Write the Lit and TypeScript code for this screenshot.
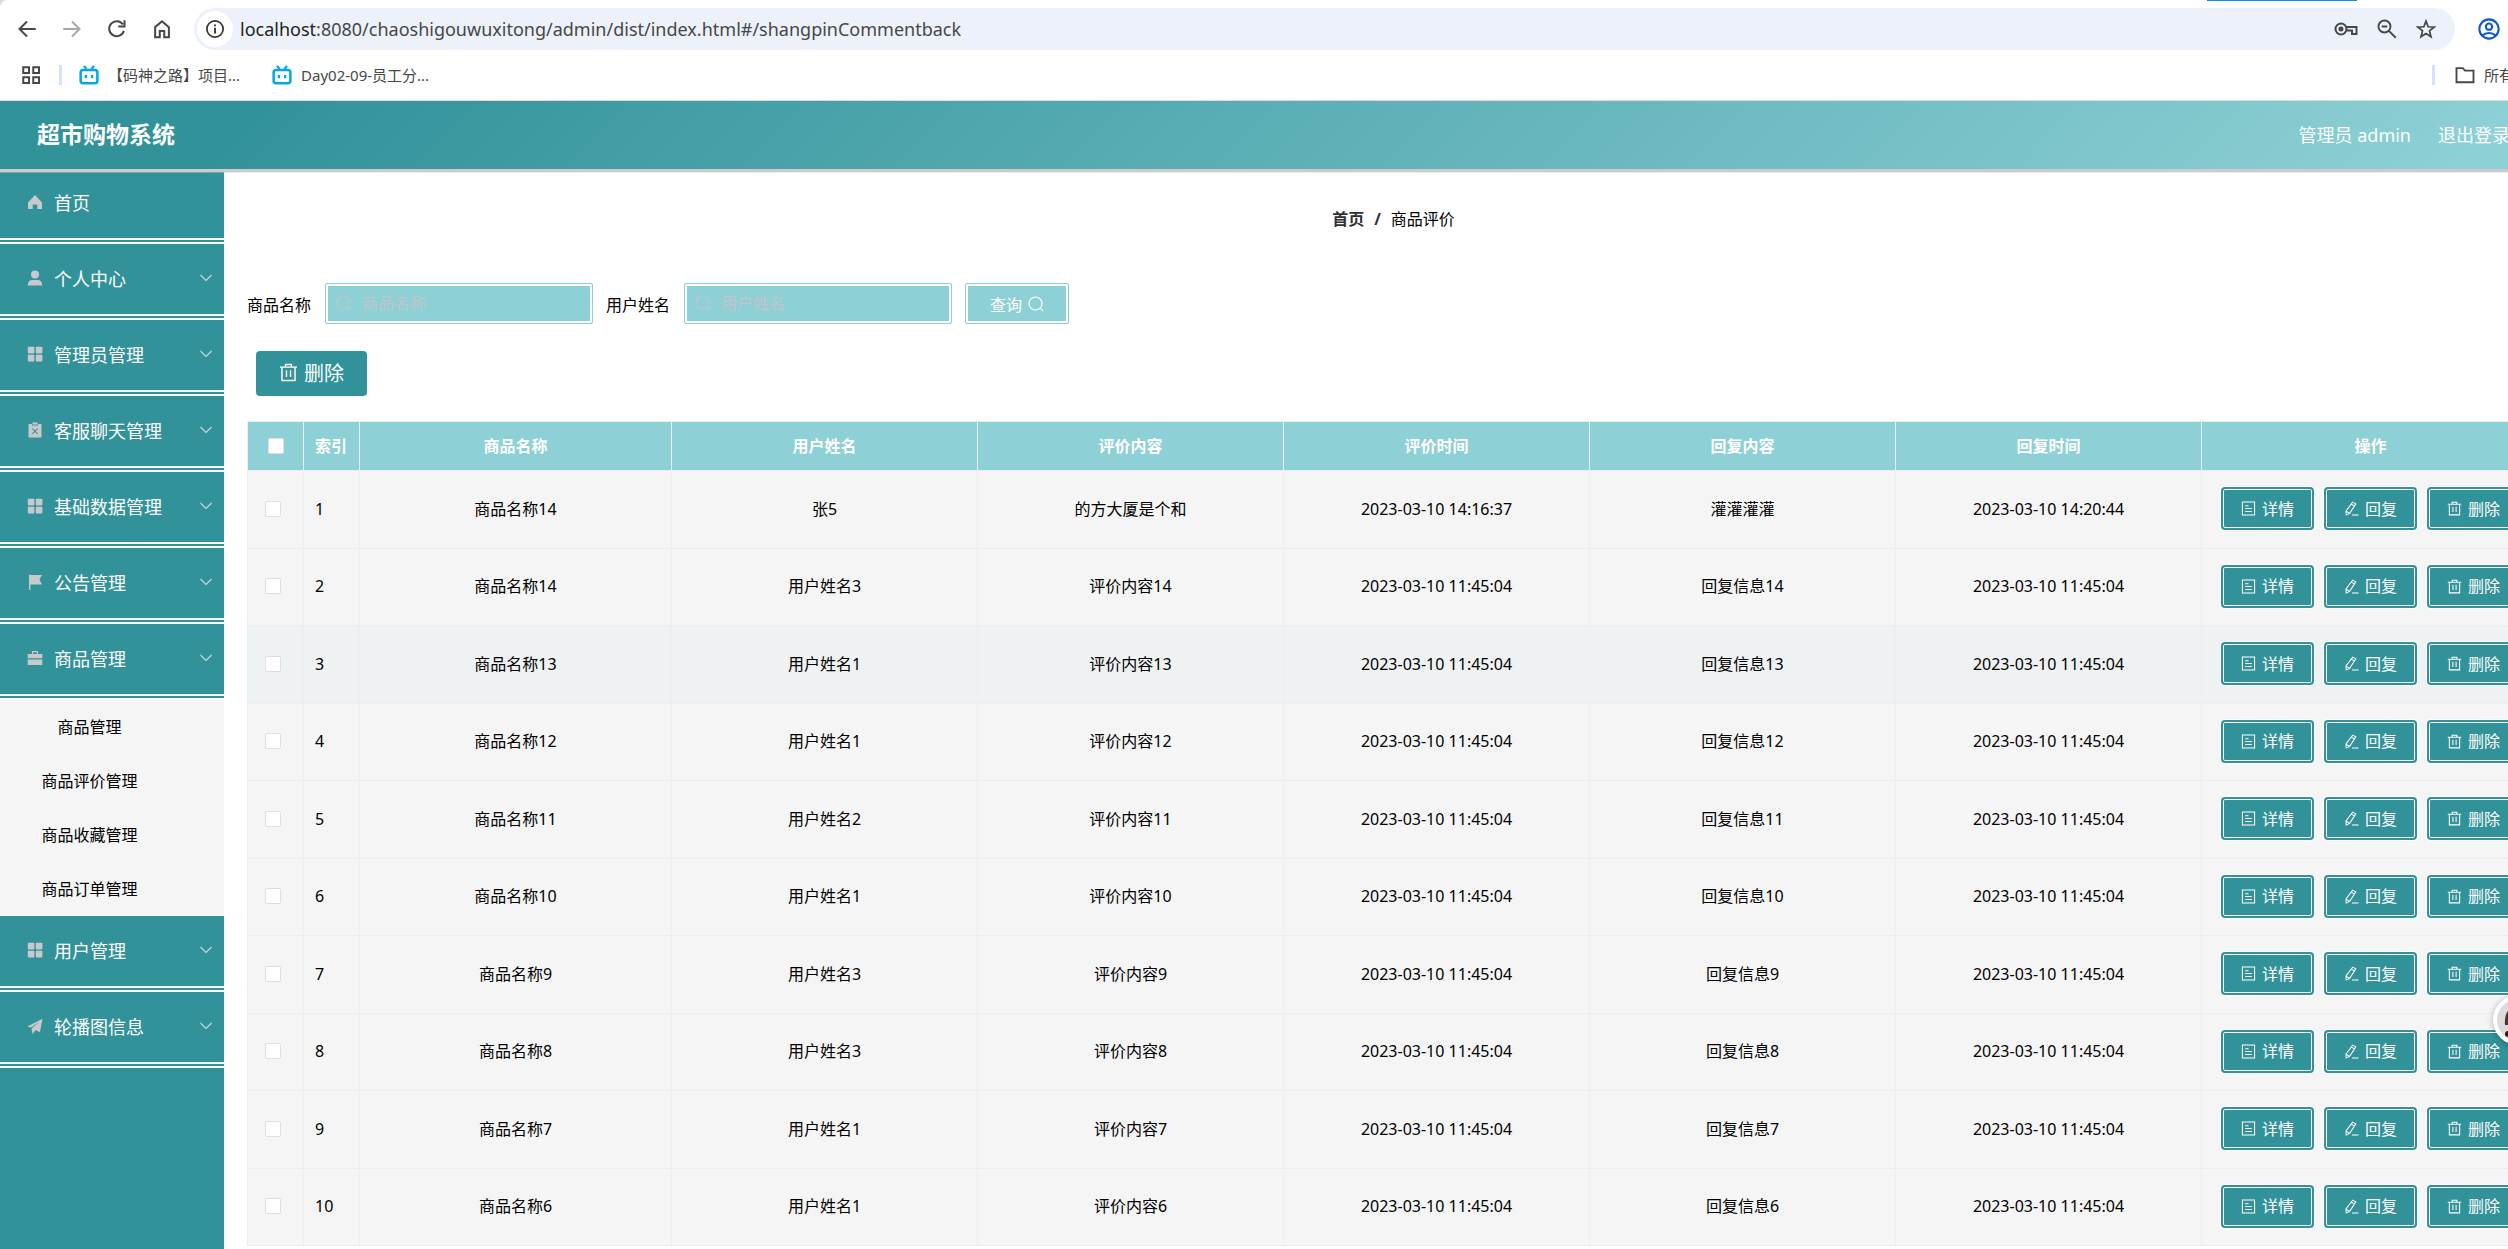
import { LitElement, html, css, svg } from "lit";
import { customElement } from "lit/decorators.js";

const ICONS: Record<string, any> = {
  home: svg`<path d="M1 8.6 8 1l7 7.600v6.400h-4.700v-4.600H5.700V15H1z"/>`,
  user: svg`<circle cx="8" cy="4.500" r="4"/><path d="M.8 15.500c0-4 2.200-5.600 4.700-5.600h5c2.500 0 4.700 1.600 4.700 5.600z"/>`,
  grid: svg`<rect x=".8" y=".8" width="6.600" height="6.600" rx=".8"/><rect x="8.800" y=".8" width="6.600" height="6.600" rx=".8"/><rect x=".8" y="8.800" width="6.600" height="6.600" rx=".8"/><rect x="8.800" y="8.800" width="6.600" height="6.600" rx=".8"/>`,
  clip: svg`<path fill-rule="evenodd" d="M1.500 2H5v1.500h6V2h3.500v13.500h-13zM5.700 6.200 5 6.900l2.300 2.300L5 11.500l.7.7L8 9.900l2.300 2.300.7-.7-2.300-2.300L11 6.900l-.7-.7L8 8.500z"/><rect x="5.500" y=".4" width="5" height="2.200"/>`,
  flag: svg`<path d="M2 .5h1.400V1H15l-2.600 4.500L15 10.500H3.400v6H2z"/>`,
  bag: svg`<path fill-rule="evenodd" d="M5 4V1h6v3h4.300v4.300H.7V4zm1.200 0h3.600V2.200H6.200z"/><path d="M.7 9.500h14.600V15H.7z"/>`,
  plane: svg`<path d="M.3 8.400 15.600.8l-2.700 13.500-4.200-2.400-3.300 4-.9-5.300 7.400-6.400-8.100 5.300z"/>`,
};

const icon = (name: string) => html`<svg class="glyph" viewBox="0 0 16 16" aria-hidden="true">${ICONS[name]}</svg>`;

const line = (cls: string, body: any) =>
  html`<svg class=${cls} viewBox="0 0 16 16" fill="none" stroke="currentColor" aria-hidden="true">${body}</svg>`;

const search = svg`<circle cx="7.500" cy="7.500" r="6.500"/><path d="m12.200 12.200 3 3"/>`;
const trash = svg`<path d="M.8 3.500h14.400M5.500 3.200V1.300h5v1.900M2.500 3.500v11.300h11V3.500M6.300 6.200v5.600M9.700 6.200v5.600"/>`;
const doc = svg`<path d="M1.500 1h13v14h-13zM4.500 5h3.500M4.500 8h7M4.500 11.300h7"/>`;
const pen = svg`<path d="M9.300 1.200 12.600 3 6 13.200l-3.700 1.700-.2-4.200zM8 3.400l3.200 2M2 10.700l3.500 2.300M8.500 15h7"/>`;
const arrow = svg`<path stroke-width="1.200" d="m2.500 5 5.500 5.500L13.500 5"/>`;

const MENU = [
  ["home", "首页"], ["user", "个人中心"], ["grid", "管理员管理"], ["clip", "客服聊天管理"],
  ["grid", "基础数据管理"], ["flag", "公告管理"], ["bag", "商品管理"],
];
const SUBMENU = ["商品管理", "商品评价管理", "商品收藏管理", "商品订单管理"];
const MENU_TAIL = [["grid", "用户管理"], ["plane", "轮播图信息"]];

const HEAD = ["商品名称", "用户姓名", "评价内容", "评价时间", "回复内容", "回复时间", "操作"];
const T = "2023-03-10 11:45:04";
const ROWS = [
  ["商品名称14", "张5", "的方大厦是个和", "2023-03-10 14:16:37", "灌灌灌灌", "2023-03-10 14:20:44"],
  ["商品名称14", "用户姓名3", "评价内容14", T, "回复信息14", T],
  ["商品名称13", "用户姓名1", "评价内容13", T, "回复信息13", T],
  ["商品名称12", "用户姓名1", "评价内容12", T, "回复信息12", T],
  ["商品名称11", "用户姓名2", "评价内容11", T, "回复信息11", T],
  ["商品名称10", "用户姓名1", "评价内容10", T, "回复信息10", T],
  ["商品名称9", "用户姓名3", "评价内容9", T, "回复信息9", T],
  ["商品名称8", "用户姓名3", "评价内容8", T, "回复信息8", T],
  ["商品名称7", "用户姓名1", "评价内容7", T, "回复信息7", T],
  ["商品名称6", "用户姓名1", "评价内容6", T, "回复信息6", T],
];
const HOVERED = 2;

const reset = css`
  * { box-sizing: border-box; }
  button, input { font: inherit; margin: 0; }
  button { cursor: pointer; border: 0; background: none; color: inherit; padding: 0; }
  a { color: inherit; text-decoration: none; }
  svg { display: block; flex: none; }
`;

@customElement("browser-bar")
class BrowserBar extends LitElement {
  static styles = [reset, css`
    :host { display: block; background: #d6dde8; color: #474747; }
    .panel { background: #fff; border-bottom: 1px solid #dcdcdc; border-top-left-radius: 8px; }
    .tools { display: flex; align-items: center; height: 58px; padding-left: 17px; }
    .nav { display: flex; gap: 25px; margin-right: 22px; }
    .nav svg, .omni svg, .profile svg { width: 20px; height: 20px; }
    .dim { color: #a9a9a9; }
    .omni { flex: 1; display: flex; align-items: center; height: 42px; border-radius: 21px; background: #ecf1fa; padding: 0 19px 0 3px; }
    .info { display: grid; place-items: center; width: 36px; height: 36px; border-radius: 50%; background: #fff; color: #333; }
    .address { flex: 1; margin-left: 7px; font-size: 18px; line-height: 26px; }
    .host { color: #1f1f1f; }
    .omni .key { width: 24px; }
    .side { display: flex; gap: 19px; }
    .profile { width: 108px; padding-left: 23px; color: #0b57d0; }
    .profile svg { width: 22px; height: 22px; }
    .marks { display: flex; align-items: center; height: 42px; padding: 0 0 8px 21px; font-size: 15px; line-height: 20px; }
    .marks svg { width: 20px; height: 20px; }
    .bar { width: 3px; height: 20px; background: #d3e3fd; margin: 0 17px 0 18px; }
    .mark { display: flex; align-items: center; gap: 9px; margin-right: 32px; }
    .mark svg { color: #00a8e8; }
    .all { display: flex; align-items: center; gap: 9px; margin-left: auto; white-space: nowrap; width: 131px; }
    .all .bar { margin: 0 11px 0 0; }
  `];
  render() {
    return html`<div class="panel">
      <div class="tools">
        <div class="nav">
          <button aria-label="后退">${line("", svg`<path stroke-width="1.600" d="M15 8H2M8 2 2 8l6 6"/>`)}</button>
          <button aria-label="前进" class="dim">${line("", svg`<path stroke-width="1.600" d="M1 8h13M8 2l6 6-6 6"/>`)}</button>
          <button aria-label="刷新">${line("", svg`<path stroke-width="1.600" d="M13.500 9.500A6 6 0 1 1 12.700 4.300M14 1v5H9"/>`)}</button>
          <button aria-label="主页">${line("", svg`<path stroke-width="1.600" d="M2.500 6.500 8 1.800l5.500 4.700v8h-3.700V9.500H6.200v5H2.500z"/>`)}</button>
        </div>
        <div class="omni">
          <span class="info">${line("", svg`<circle cx="8" cy="8" r="6.500" stroke-width="1.400"/><path stroke-width="1.500" d="M8 7v4.500M8 4.300v1.500"/>`)}</span>
          <span class="address"><span class="host">localhost</span>:8080/chaoshigouwuxitong/admin/dist/index.html#/shangpinCommentback</span>
          <span class="side">
            <svg class="key" viewBox="0 0 24 20" fill="none" stroke="currentColor" stroke-width="2"><circle cx="7" cy="10" r="5.500"/><circle cx="7" cy="10" r="1.500" fill="currentColor"/><path d="M12 8h10.500v7H18v-3.500h-5"/></svg>
            ${line("", svg`<circle cx="6" cy="6" r="4.800" stroke-width="1.500"/><path stroke-width="1.500" d="m9.500 9.500 5.500 5.500M3.800 6h4.400"/>`)}
            ${line("", svg`<path stroke-width="1.400" d="m8 1.700 1.700 4.500 4.800.3-3.700 3 1.200 4.700L8 11.600l-4 2.600 1.200-4.700-3.700-3 4.800-.3z"/>`)}
          </span>
        </div>
        <div class="profile">${line("", svg`<circle cx="8" cy="8" r="7" stroke-width="1.500"/><circle cx="8" cy="6.300" r="2.300" stroke-width="1.500"/><path stroke-width="1.500" d="M3 12.800c3-2.400 7-2.400 10 0"/>`)}</div>
      </div>
      <div class="marks">
        ${line("", svg`<path stroke-width="1.600" d="M1.800 1.800h4.600v4.600H1.800zM9.800 1.800h4.600v4.600H9.800zM1.800 9.800h4.600v4.600H1.800zM9.800 9.800h4.600v4.600H9.800z"/>`)}
        <span class="bar"></span>
        ${["【码神之路】项目...", "Day02-09-员工分..."].map((t) => html`<a class="mark" href="#">${line("", svg`<rect x="1.300" y="4" width="13.400" height="10.600" rx="2" stroke-width="2"/><path stroke-width="1.800" d="m4 .7 2 2.500M12 .7l-2 2.500M5.500 8v2.500M10.500 8v2.500"/>`)}<span>${t}</span></a>`)}
        <a class="all" href="#"><span class="bar"></span>${line("", svg`<path stroke-width="1.500" d="M1.200 2.500h5L8 4.500h6.800v9.300H1.200z"/>`)}<span>所有书签</span></a>
      </div>
    </div>`;
  }
}

@customElement("side-menu")
class SideMenu extends LitElement {
  static styles = [reset, css`
    :host { display: block; flex: none; width: 224px; background: #32929a; }
    .item { display: flex; align-items: center; width: 100%; height: 76px; padding: 0 10px 2px 27px; border-bottom: 6px double #fff; color: #fff; font-size: 18px; text-align: left; }
    .glyph { width: 16px; height: 16px; margin-right: 11px; fill: #c8c9cc; }
    .label { flex: 1; }
    .arrow { width: 16px; height: 16px; color: #c3d9db; }
    .sub { background: #f5f5f5; padding-right: 45px; }
    .sub a { display: block; line-height: 54px; font-size: 16px; text-align: center; color: #000; }
  `];
  item([name, text]: string[]) {
    return html`<button class="item">${icon(name)}<span class="label">${text}</span>${name === "home" ? "" : line("arrow", arrow)}</button>`;
  }
  render() {
    return html`<nav>
      ${MENU.map((m) => this.item(m))}
      <div class="sub">${SUBMENU.map((t) => html`<a href="#">${t}</a>`)}</div>
      ${MENU_TAIL.map((m) => this.item(m))}
    </nav>`;
  }
}

@customElement("comment-table")
class CommentTable extends LitElement {
  static styles = [reset, css`
    :host { display: block; }
    table { width: 100%; table-layout: fixed; border-collapse: separate; border-spacing: 0; border: solid #ebeef5; border-width: 1px 0 0 1px; font-size: 16px; line-height: 24px; color: #000; }
    .c-tick { width: 56px; }
    .c-name { width: 312px; }
    .c-ops { width: 338px; }
    th, td { padding: 0; text-align: center; border: solid #ebeef5; border-width: 0 1px 1px 0; }
    th { height: 49px; background: #8dd0d5; color: #fff; font-weight: 700; }
    td { height: 78px; padding-bottom: 2px; background: #f5f5f5; }
    tr:nth-child(even) td { height: 77px; }
    .hovered td { background: #eef2f3; }
    .index { text-align: left; padding-left: 11px; }
    .tick { appearance: none; display: block; width: 16px; height: 16px; margin: 0 auto; border: 1px solid #dcdfe6; border-radius: 2px; background: #fff; }
    td .tick { margin-left: 17px; }
    .ops { display: flex; justify-content: center; gap: 10px; }
    .op { display: flex; align-items: center; justify-content: center; gap: 6px; width: 93px; height: 43px; border: 2px solid #32929a; border-radius: 4px; background: #32929a; box-shadow: inset 0 0 0 1px #fff, 0 0 0 1px #fff; color: #fff; }
    .op svg { width: 15px; height: 15px; stroke-width: 1.100; }
  `];
  render() {
    return html`<table>
      <colgroup><col class="c-tick"><col class="c-tick"><col class="c-name"><col><col><col><col><col><col class="c-ops"></colgroup>
      <thead><tr>
        <th><input class="tick" type="checkbox" aria-label="全选"></th>
        <th class="index">索引</th>
        ${HEAD.map((h) => html`<th>${h}</th>`)}
      </tr></thead>
      <tbody>${ROWS.map((r, i) => html`<tr class=${i === HOVERED ? "hovered" : ""}>
        <td><input class="tick" type="checkbox" aria-label="选择第${i + 1}行"></td>
        <td class="index">${i + 1}</td>
        ${r.map((c) => html`<td>${c}</td>`)}
        <td><div class="ops">
          <button class="op">${line("", doc)}详情</button>
          <button class="op">${line("", pen)}回复</button>
          <button class="op">${line("", trash)}删除</button>
        </div></td>
      </tr>`)}</tbody>
    </table>`;
  }
}

@customElement("app-root")
class AppRoot extends LitElement {
  static styles = [reset, css`
    :host { display: block; position: relative; height: 100vh; overflow: hidden; background: #fff; font-family: "Noto Sans", "Noto Sans CJK SC", sans-serif; }
    .page { width: calc(100% + 55px); min-height: 100%; display: flex; flex-direction: column; }
    .tab { position: absolute; top: 0; left: 88%; width: 150px; height: 1px; background: #0b8df5; }
    .top { display: flex; align-items: center; gap: 27px; height: 71px; padding: 0 53px 2px 37px; border-bottom: 3px solid #ccc; box-shadow: 0 1px 0 rgba(204, 204, 204, .4); margin-bottom: -4px; position: relative; z-index: 1; color: #fff; font-size: 18px; background: linear-gradient(135deg, #32929a 10%, #8dd0d5 96%); }
    .brand { flex: 1; margin: 0; font-size: 23px; line-height: 32px; font-weight: 700; }
    .body { flex: 1; display: flex; align-items: stretch; }
    main { flex: 1; min-width: 0; padding: 39px 23px 0; }
    .crumbs { display: flex; justify-content: center; gap: 10px; font-size: 16px; line-height: 24px; color: #000; }
    .crumbs a, .slash { font-weight: 700; color: #303133; }
    .filters { display: flex; align-items: center; gap: 13px; margin-top: 52px; font-size: 16px; color: #000; }
    .field { display: flex; align-items: center; gap: 14px; }
    .box { display: flex; align-items: center; gap: 10px; width: 268px; height: 41px; padding: 0 10px 2px; border: 1px solid #8dd0d5; border-radius: 2px; background: #8dd0d5; box-shadow: inset 0 0 0 2px #fff; color: #c0c4cc; }
    .box input { flex: 1; min-width: 0; border: 0; padding: 0; background: none; outline: 0; line-height: 24px; color: #fff; }
    .box input::placeholder { color: #c0c4cc; opacity: 1; }
    .box svg, .query svg { width: 16px; height: 16px; stroke-width: 1.200; }
    .query { display: flex; align-items: center; justify-content: center; gap: 6px; width: 104px; height: 41px; border: 1px solid #8dd0d5; border-radius: 2px; background: #8dd0d5; box-shadow: inset 0 0 0 2px #fff; color: #fff; }
    .remove { display: flex; align-items: center; justify-content: center; gap: 6px; width: 111px; height: 45px; margin: 27px 0 25px 9px; padding-bottom: 2px; border-radius: 4px; background: #32929a; color: #fff; font-size: 20px; }
    .remove svg { width: 19px; height: 19px; stroke-width: 1.200; }
    .avatar { position: absolute; right: -35px; top: 995px; width: 50px; height: 50px; border: 4px solid #fff; border-radius: 50%; background: #dcdcdc; box-shadow: 0 1px 6px rgba(0, 0, 0, .3); overflow: hidden; z-index: 2; }
  `];
  render() {
    const field = (id: string, label: string) => html`<div class="field"><label for=${id}>${label}</label>
      <span class="box">${line("", search)}<input id=${id} type="text" placeholder=${label}></span></div>`;
    return html`
      <div class="page">
        <browser-bar></browser-bar>
        <header class="top"><h1 class="brand">超市购物系统</h1><span>管理员 admin</span><a href="#">退出登录</a></header>
        <div class="body">
          <side-menu></side-menu>
          <main>
            <nav class="crumbs"><a href="#">首页</a><span class="slash">/</span><span>商品评价</span></nav>
            <form class="filters">
              ${field("goods", "商品名称")}${field("person", "用户姓名")}
              <button class="query" type="button">查询${line("", search)}</button>
            </form>
            <button class="remove">${line("", trash)}删除</button>
            <comment-table></comment-table>
          </main>
        </div>
      </div>
      <span class="tab"></span>
      <svg class="avatar" viewBox="0 0 42 42" aria-hidden="true"><path fill="#4a3634" d="M8 26C7 14 12 7 22 6v20z"/><circle cx="11" cy="35" r="3" fill="#222"/></svg>`;
  }
}
